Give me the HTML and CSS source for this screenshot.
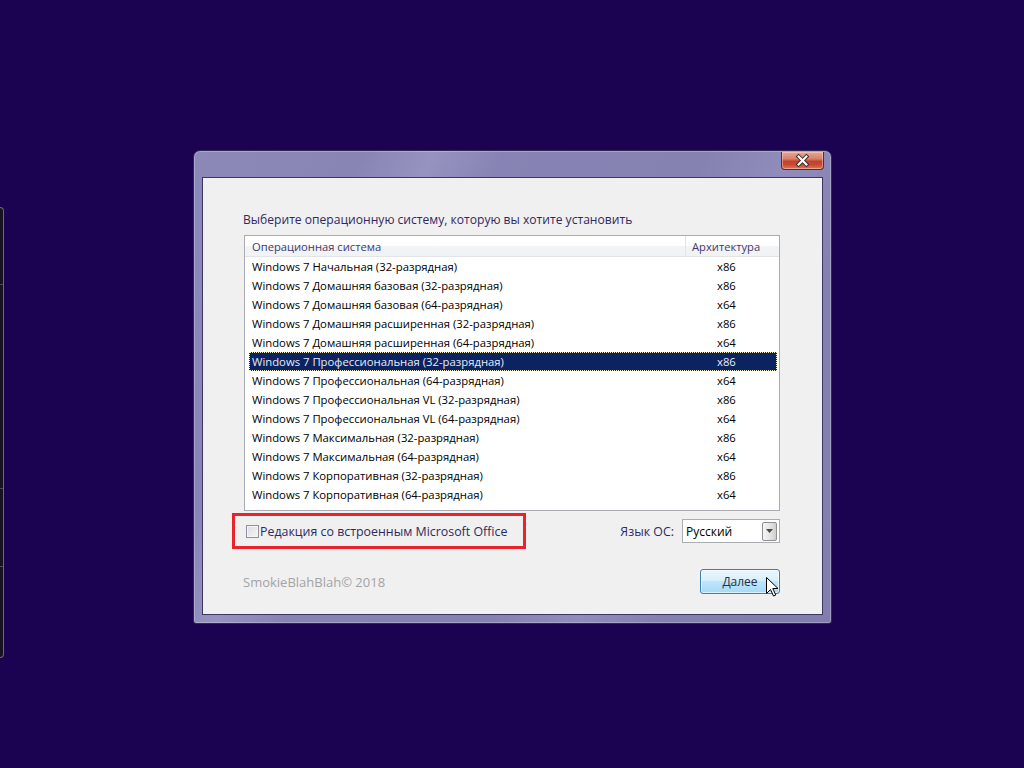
FILE: index.html
```html
<!DOCTYPE html>
<html lang="ru">
<head>
    <meta charset="UTF-8">
    <meta name="viewport" content="width=device-width, initial-scale=1.0">
    <title>Установка Windows</title>
    <link rel="stylesheet" href="styles.css">
</head>
<body>
    <div class="desktop">
        <div class="side-window">
            <div class="side-line"></div>
            <div class="side-line"></div>
            <div class="side-line"></div>
        </div>

        <div class="window">
            <div class="titlebar">
                <button class="close" title="Закрыть">
                    <svg width="42" height="17" viewBox="0 0 42 17">
                        <path d="M17 4.5 L25 12.5 M25 4.5 L17 12.5" stroke="#3b2a2a" stroke-width="4.2" stroke-linecap="square" fill="none"/>
                        <path d="M17 4.5 L25 12.5 M25 4.5 L17 12.5" stroke="#ffffff" stroke-width="2.2" stroke-linecap="square" fill="none"/>
                    </svg>
                </button>
            </div>

            <div class="client">
                <p class="prompt">Выберите операционную систему, которую вы хотите установить</p>

                <div class="listbox">
                    <div class="list-head">
                        <span class="col-os">Операционная система</span>
                        <span class="col-arch">Архитектура</span>
                    </div>
                    <ul class="list-rows" id="osList"></ul>
                </div>

                <div class="options">
                    <label class="office">
                        <span class="checkbox"></span>
                        Редакция со встроенным Microsoft Office
                    </label>
                    <div class="lang">
                        <span>Язык ОС:</span>
                        <div class="select">
                            <span>Русский</span>
                            <span class="select-btn">
                                <svg width="7" height="4" viewBox="0 0 7 4"><path d="M0 0 H7 L3.5 4 Z" fill="#4a4a4a"/></svg>
                            </span>
                        </div>
                    </div>
                </div>

                <div class="footer">
                    <span class="copyright">SmokieBlahBlah© 2018</span>
                    <button class="next">Далее</button>
                </div>
            </div>
        </div>

        <svg class="cursor" width="13" height="20" viewBox="0 0 13 20">
            <path d="M0.5 0.5 L0.5 16.5 L4.5 12.5 L7.5 19 L9.8 18 L6.8 11.5 L12 11.5 Z" fill="#ffffff" stroke="#000000" stroke-width="1"/>
        </svg>
    </div>

    <script>
let editions = [
    ["Windows 7 Начальная (32-разрядная)", "x86"],
    ["Windows 7 Домашняя базовая (32-разрядная)", "x86"],
    ["Windows 7 Домашняя базовая (64-разрядная)", "x64"],
    ["Windows 7 Домашняя расширенная (32-разрядная)", "x86"],
    ["Windows 7 Домашняя расширенная (64-разрядная)", "x64"],
    ["Windows 7 Профессиональная (32-разрядная)", "x86"],
    ["Windows 7 Профессиональная (64-разрядная)", "x64"],
    ["Windows 7 Профессиональная VL (32-разрядная)", "x86"],
    ["Windows 7 Профессиональная VL (64-разрядная)", "x64"],
    ["Windows 7 Максимальная (32-разрядная)", "x86"],
    ["Windows 7 Максимальная (64-разрядная)", "x64"],
    ["Windows 7 Корпоративная (32-разрядная)", "x86"],
    ["Windows 7 Корпоративная (64-разрядная)", "x64"]
];
let selected = 5;

function renderList() {
    let list = document.getElementById('osList');
    list.innerHTML = '';
    editions.forEach((item, index) => {
        let li = document.createElement('li');
        if (index === selected) li.className = 'selected';
        li.innerHTML = `<span class="col-os">${item[0]}</span><span class="col-arch">${item[1]}</span>`;
        li.onclick = () => { selected = index; renderList(); };
        list.appendChild(li);
    });
}
renderList();
    </script>
</body>
</html>
```

FILE: styles.css
```css
* {
    box-sizing: border-box;
}

body {
    margin: 0;
    background-color: #1c0352;
    font-family: "Open Sans", "Noto Sans", sans-serif;
    font-size: 12px;
}

.desktop {
    position: relative;
    width: 1024px;
    height: 768px;
    overflow: hidden;
    padding-top: 150px;
}

.side-window {
    position: absolute;
    left: 0;
    top: 207px;
    width: 4px;
    height: 451px;
    background-color: #171320;
    border: 1px solid #6d6a78;
    border-left: none;
    border-radius: 0 4px 4px 0;
}

.side-line {
    height: 1px;
    background-color: #4d4a58;
    margin-top: 76px;
}

.side-line:nth-child(2) {
    margin-top: 203px;
}

.side-line:nth-child(3) {
    margin-top: 77px;
}

.window {
    margin-left: 193px;
    width: 639px;
    height: 474px;
    display: flex;
    flex-direction: column;
    padding: 0 8px 8px 8px;
    border: 1px solid #2e2950;
    border-radius: 7px 7px 3px 3px;
    background: linear-gradient(115deg, #8c89b9 0%, #8884b4 20%, #9793c0 28%, #8783b4 36%, #8582b2 60%, #908cbb 70%, #8480b1 80%, #817dae 100%);
    box-shadow: inset 0 0 0 1px rgba(255, 255, 255, 0.25);
}

.titlebar {
    height: 26px;
    display: flex;
    justify-content: flex-end;
    align-items: flex-start;
}

.close {
    width: 43px;
    height: 18px;
    margin-top: 1px;
    margin-right: -1px;
    padding: 0;
    border: 1px solid #5a2a32;
    border-top: none;
    border-radius: 0 0 4px 4px;
    background: linear-gradient(#e9a593 0%, #d9806a 40%, #c1432a 55%, #c54a30 75%, #dc7a5e 100%);
    box-shadow: inset 0 0 0 1px rgba(255, 220, 210, 0.45);
    display: flex;
    align-items: center;
    justify-content: center;
}

.close svg {
    display: block;
}

.client {
    flex: 1;
    background-color: #f0f0f0;
    border: 1px solid #3b3760;
}

.prompt {
    margin: 34px 0 0 40px;
    font-size: 12.1px;
    line-height: 16px;
    color: #2f2862;
    white-space: nowrap;
}

.listbox {
    margin: 7px 0 0 41px;
    width: 536px;
    height: 276px;
    background-color: #fff;
    border: 1px solid #abadb3;
}

.list-head {
    height: 21px;
    display: flex;
    align-items: center;
    font-size: 11.2px;
    background: linear-gradient(#ffffff 0%, #ffffff 50%, #f3f4f6 51%, #f1f2f4 100%);
    border-bottom: 1px solid #e3e4e8;
    color: #3e3a6e;
}

.list-head .col-os {
    width: 441px;
    padding-left: 7px;
    height: 100%;
    line-height: 21px;
    border-right: 1px solid #e3e4e8;
}

.list-head .col-arch {
    padding-left: 6px;
}

.list-rows {
    list-style: none;
    margin: 0;
    padding: 0 2px 0 4px;
}

.list-rows li {
    height: 19px;
    line-height: 19px;
    display: flex;
    font-size: 11.3px;
    color: #000;
    white-space: nowrap;
    cursor: default;
}

.list-rows .col-os {
    width: 437px;
    padding-left: 3px;
}

.list-rows .col-arch {
    padding-left: 31px;
}

.list-rows li.selected {
    background-color: #0b2361;
    color: #e8ecf5;
    outline: 1px dotted #f4f0c8;
    outline-offset: -1px;
}

.options {
    margin: 2px 0 0 29px;
    width: 548px;
    display: flex;
    align-items: center;
    justify-content: space-between;
}

.office {
    width: 294px;
    height: 36px;
    border: 3px solid #e8232b;
    display: flex;
    align-items: center;
    padding: 1px 0 0 11px;
    font-size: 12.4px;
    color: #2f2a5c;
    white-space: nowrap;
}

.checkbox {
    width: 13px;
    height: 13px;
    margin-right: 1px;
    border: 1px solid #8f8f9f;
    background: linear-gradient(135deg, #dcdce2 0%, #f6f6f8 100%);
    box-shadow: inset 0 0 0 1px #f4f4f4;
}

.lang {
    display: flex;
    align-items: center;
    gap: 8px;
    font-size: 12.4px;
    color: #2f2a5c;
}

.select {
    width: 98px;
    height: 24px;
    border: 1px solid #abadb3;
    background-color: #fff;
    display: flex;
    align-items: center;
    justify-content: space-between;
    padding: 0 2px 0 3px;
    font-size: 12px;
    color: #000;
}

.select-btn {
    width: 15px;
    height: 19px;
    border: 1px solid #8f8f8f;
    border-radius: 2px;
    background: linear-gradient(90deg, #f4f4f4 0%, #e6e6e6 50%, #cfcfcf 100%);
    display: flex;
    align-items: center;
    justify-content: center;
}

.select-btn svg {
    display: block;
}

.footer {
    margin: 20px 0 0 40px;
    width: 537px;
    display: flex;
    align-items: center;
    justify-content: space-between;
}

.copyright {
    font-size: 13px;
    color: #a3a3a3;
}

.next {
    width: 80px;
    height: 25px;
    font-family: inherit;
    font-size: 12px;
    color: #243146;
    border: 1px solid #3c7fb1;
    border-radius: 3px;
    background: linear-gradient(#eaf6fd 0%, #d9f0fc 45%, #bee6fd 50%, #a7d9f5 100%);
    box-shadow: inset 0 0 0 1px rgba(255, 255, 255, 0.6);
    padding: 0;
}

.cursor {
    position: absolute;
    left: 766px;
    top: 577px;
}
```
